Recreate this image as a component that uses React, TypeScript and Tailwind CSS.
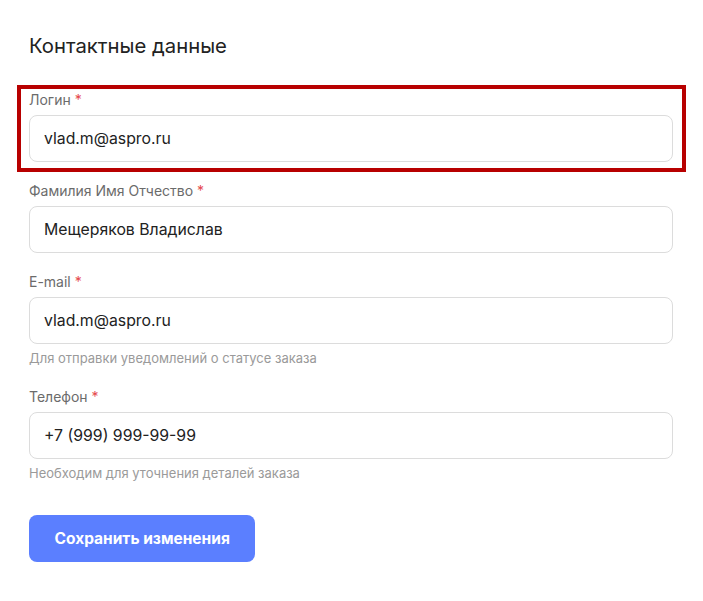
import React from "react";

interface FieldProps {
  label: string;
  value: string;
  hint?: string;
  highlighted?: boolean;
}

function Field({ label, value, hint, highlighted }: FieldProps) {
  return (
    <div className="relative">
      {/* annotation frame drawn over the field */}
      {highlighted && (
        <div className="pointer-events-none absolute -left-[12px] -top-[7px] h-[87px] w-[669px] border-4 border-[#b80000]" />
      )}
      <label className="mb-[7px] block text-[14px] leading-4 text-[#6b6b6b]">
        {label} <span className="text-[#e5484d]">*</span>
      </label>
      <input
        readOnly
        value={value}
        className="block h-[47px] w-full rounded-lg border border-[#dcdcdc] bg-white px-[14px] text-[15.8px] text-[#222] outline-none"
      />
      {hint && <p className="mt-[6px] mb-[2px] text-[13px] leading-4 text-[#9a9a9a]">{hint}</p>}
    </div>
  );
}

export default function App() {
  return (
    <div className="min-h-[601px] w-[703px] bg-white pl-[29px] pt-[32px] font-['Inter','Noto_Sans',sans-serif]">
      <div className="w-[644px]">
        <h2 className="text-[20.3px] leading-7 font-normal text-[#222]">Контактные данные</h2>

        <div className="mt-[32px] flex flex-col gap-[21px]">
          <Field label="Логин" value="vlad.m@aspro.ru" highlighted />
          <Field label="Фамилия Имя Отчество" value="Мещеряков Владислав" />
          <Field label="E-mail" value="vlad.m@aspro.ru" hint="Для отправки уведомлений о статусе заказа" />
          <Field label="Телефон" value="+7 (999) 999-99-99" hint="Необходим для уточнения деталей заказа" />
        </div>

        <button className="mt-[32px] h-[47px] rounded-lg bg-[#5b7fff] px-[25.5px] text-[15.5px] font-bold text-white">
          Сохранить изменения
        </button>
      </div>
    </div>
  );
}
